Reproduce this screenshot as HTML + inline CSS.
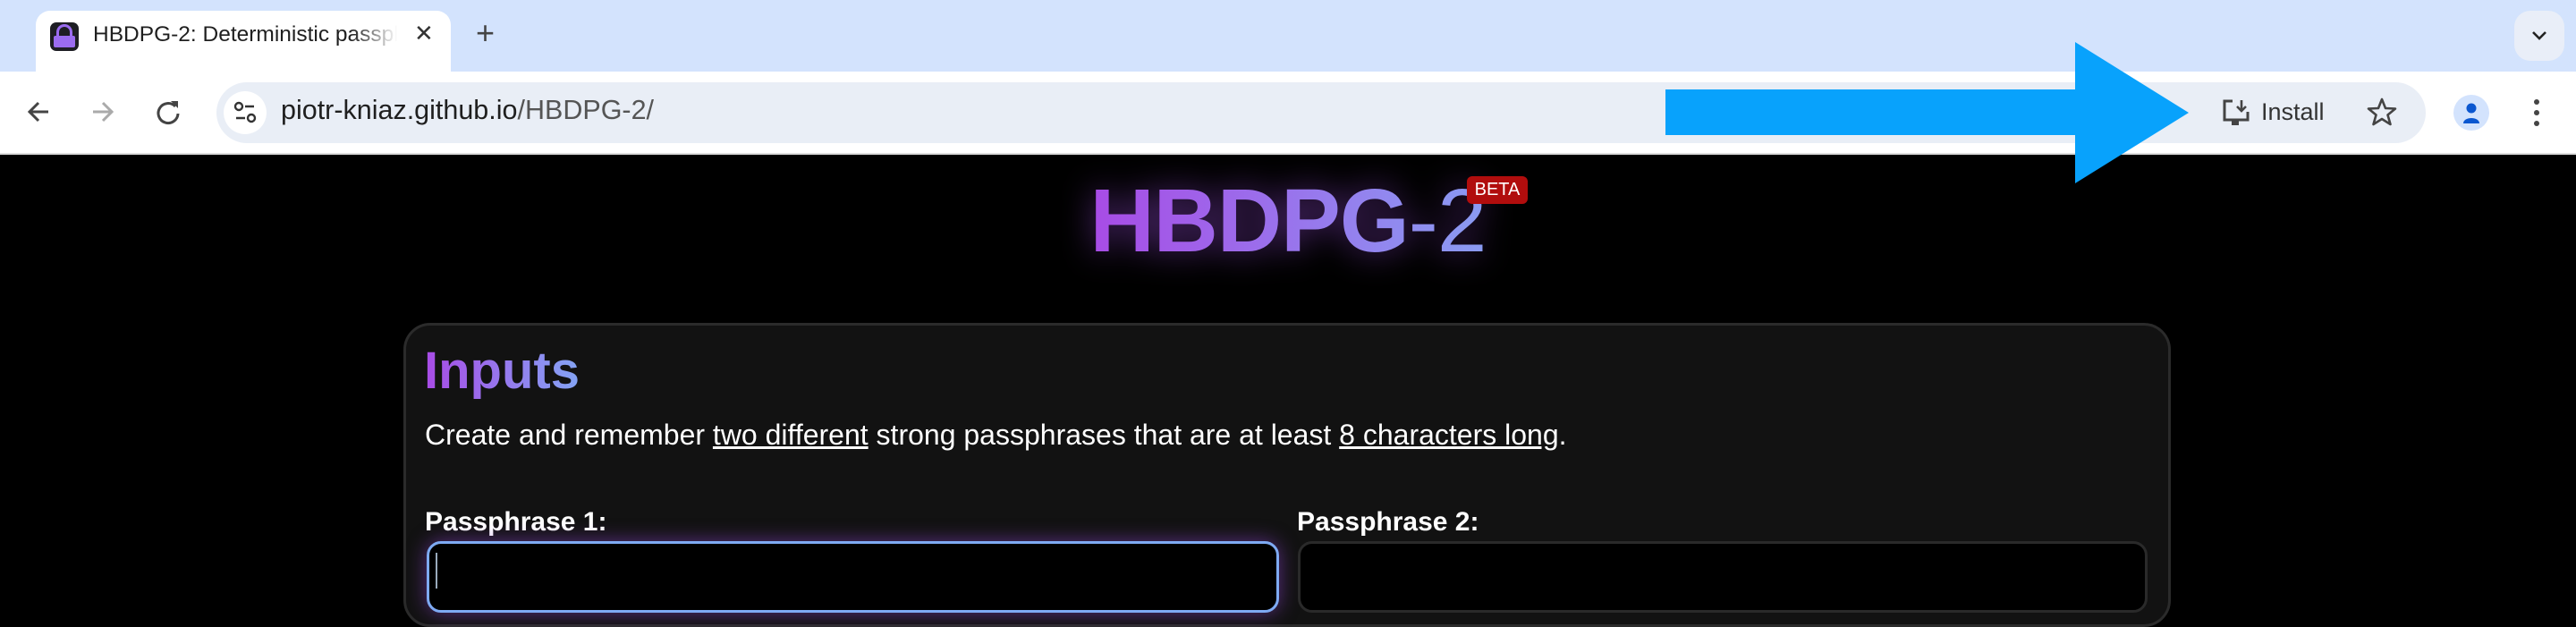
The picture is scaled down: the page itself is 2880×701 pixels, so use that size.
<!DOCTYPE html>
<html><head><meta charset="utf-8"><style>
*{margin:0;padding:0;box-sizing:border-box}
body{width:2880px;height:660px;overflow:hidden;background:#000;font-family:"Liberation Sans",sans-serif;position:relative}
.abs{position:absolute}
</style></head><body>
<!-- tab strip -->
<div class="abs" style="left:0;top:0;width:2880px;height:80px;background:#d3e3fd"></div>
<div class="abs" style="left:40px;top:12px;width:464px;height:70px;background:#fff;border-radius:16px 16px 0 0"></div>
<div class="abs" style="left:56px;top:25px;width:32px;height:32px;background:#1e1e24;border-radius:7px"></div>
<div class="abs" style="left:63px;top:27px;width:18px;height:16px;border:3px solid #9b6cf0;border-bottom:none;border-radius:9px 9px 0 0"></div>
<div class="abs" style="left:60px;top:40px;width:24px;height:13px;background:#9b6cf0;border-radius:2px"></div>
<div class="abs" style="left:104px;top:25px;width:340px;font-size:24.5px;color:#1f1f1f;white-space:nowrap;overflow:hidden;-webkit-mask-image:linear-gradient(90deg,#000 85%,transparent)">HBDPG-2: Deterministic passphrase</div>
<div class="abs" style="left:463px;top:22px;font-size:26px;color:#333">✕</div>
<div class="abs" style="left:532px;top:16px;font-size:36px;color:#444">+</div>
<div class="abs" style="left:2811px;top:12px;width:56px;height:56px;background:#e9eef8;border-radius:18px"></div>
<svg class="abs" style="left:2829px;top:33px" width="20" height="14"><path d="M3 3 L10 10 L17 3" stroke="#222" stroke-width="2.6" fill="none"/></svg>
<!-- toolbar -->
<div class="abs" style="left:0;top:80px;width:2880px;height:93px;background:#fff;border-bottom:2px solid #ddd"></div>
<svg class="abs" style="left:28px;top:110px" width="30" height="30"><path d="M26 15H6M15 5L5 15L15 25" stroke="#444" stroke-width="3" fill="none"/></svg>
<svg class="abs" style="left:100px;top:110px" width="30" height="30"><path d="M4 15H24M15 5L25 15L15 25" stroke="#aaa" stroke-width="3" fill="none"/></svg>
<svg class="abs" style="left:172px;top:110px" width="32" height="32"><path d="M24 9A11 11 0 1 0 27 17" stroke="#444" stroke-width="3" fill="none"/><path d="M19 3H27V11Z" fill="#444"/></svg>
<div class="abs" style="left:242px;top:92px;width:2470px;height:68px;background:#e9eef6;border-radius:34px"></div>
<div class="abs" style="left:250px;top:102px;width:48px;height:48px;background:#fff;border-radius:50%"></div>
<svg class="abs" style="left:260px;top:112px" width="28" height="28"><circle cx="7" cy="7" r="4" stroke="#333" stroke-width="2.4" fill="none"/><path d="M14 7H24M4 20H14" stroke="#333" stroke-width="2.6"/><circle cx="21" cy="20" r="4" stroke="#333" stroke-width="2.4" fill="none"/></svg>
<div class="abs" style="left:314px;top:106px;font-size:30.5px;color:#1f1f1f">piotr-kniaz.github.io<span style="color:#555">/HBDPG-2/</span></div>
<svg class="abs" style="left:2484px;top:110px" width="34" height="32"><path d="M12 3H3V24H29V15" stroke="#444" stroke-width="3" fill="none"/><path d="M11 24V30H19V24" fill="#444"/><path d="M22 2V14M17 9L22 14L27 9" stroke="#444" stroke-width="2.6" fill="none"/></svg>
<div class="abs" style="left:2528px;top:110px;font-size:27px;color:#333">Install</div>
<svg class="abs" style="left:2645px;top:108px" width="36" height="34"><path d="M18 3L22 13L33 13.5L24.5 20.5L27.5 31L18 25L8.5 31L11.5 20.5L3 13.5L14 13Z" stroke="#444" stroke-width="2.6" fill="none" stroke-linejoin="round"/></svg>
<div class="abs" style="left:2743px;top:106px;width:40px;height:40px;background:#d3e3fd;border-radius:50%"></div>
<svg class="abs" style="left:2749px;top:112px" width="28" height="28"><circle cx="14" cy="9" r="5.5" fill="#0b57d0"/><path d="M5 26C5 18 23 18 23 26Z" fill="#0b57d0"/></svg>
<svg class="abs" style="left:2828px;top:108px" width="16" height="36"><circle cx="8" cy="6" r="3" fill="#444"/><circle cx="8" cy="18" r="3" fill="#444"/><circle cx="8" cy="30" r="3" fill="#444"/></svg>
<!-- blue arrow -->
<svg class="abs" style="left:1860px;top:46px" width="600" height="160"><path d="M2 54H460V1L587 80L460 159V105H2Z" fill="#08a2fc"/></svg>
<!-- title -->
<div class="abs" style="left:0;top:190px;width:2880px;text-align:center;filter:drop-shadow(0 0 18px rgba(160,80,230,.55))">
<span style="font-size:100px;font-weight:bold;letter-spacing:-1px;background:linear-gradient(90deg,#a84be6,#8a9cf2);-webkit-background-clip:text;color:transparent">HBDPG<span style="font-weight:normal">-2</span></span></div>
<div class="abs" style="left:1640px;top:197px;width:68px;height:31px;background:#b10d0d;border-radius:6px;color:#fff;font-size:20px;text-align:center;line-height:31px">BETA</div>
<!-- card -->
<div class="abs" style="left:451px;top:361px;width:1976px;height:340px;background:#121212;border:3px solid #2b2b2b;border-radius:30px"></div>
<div class="abs" style="left:474px;top:381px;font-size:58px;font-weight:bold;background:linear-gradient(90deg,#a84be6,#84a4f4);-webkit-background-clip:text;color:transparent">Inputs</div>
<div class="abs" style="left:475px;top:468px;font-size:32px;color:#fff;white-space:nowrap">Create and remember <u>two different</u> strong passphrases that are at least <u>8 characters long</u>.</div>
<div class="abs" style="left:475px;top:567px;font-size:30px;font-weight:bold;color:#fff">Passphrase 1:</div>
<div class="abs" style="left:1450px;top:567px;font-size:30px;font-weight:bold;color:#fff">Passphrase 2:</div>
<div class="abs" style="left:477px;top:605px;width:953px;height:80px;background:#000;border:3px solid #7eaaf3;border-radius:16px;box-shadow:0 0 22px rgba(150,70,220,.55)"></div>
<div class="abs" style="left:487px;top:618px;width:2px;height:40px;background:#9ab"></div>
<div class="abs" style="left:1451px;top:605px;width:950px;height:80px;background:#000;border:3px solid #2a2a2a;border-radius:16px"></div>
</body></html>
